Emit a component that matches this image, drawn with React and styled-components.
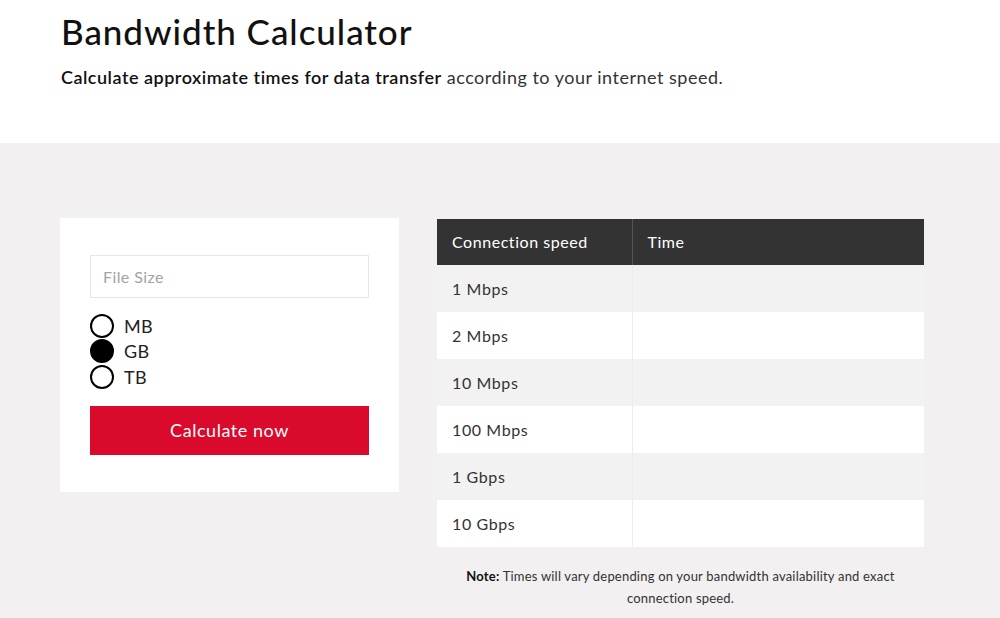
import React from 'react';
import styled, { createGlobalStyle } from 'styled-components';

const speeds = ['1 Mbps', '2 Mbps', '10 Mbps', '100 Mbps', '1 Gbps', '10 Gbps'];
const units = ['MB', 'GB', 'TB'];

const App = () => {
  return (
    <Page>
      <GlobalStyle />
      <Header>
        <Title>Bandwidth Calculator</Title>
        <Lead>
          <strong>Calculate approximate times for data transfer</strong> according to your internet speed.
        </Lead>
      </Header>
      <Body>
        <Card>
          <SizeInput placeholder="File Size" />
          <RadioGroup>
            {units.map((u) => (
              <RadioRow key={u}>
                <RadioDot checked={u === 'GB'} />
                <RadioLabel>{u}</RadioLabel>
              </RadioRow>
            ))}
          </RadioGroup>
          <CalcButton>Calculate now</CalcButton>
        </Card>
        <TableWrap>
          <SpeedTable>
            <thead>
              <tr>
                <Th>Connection speed</Th>
                <Th>Time</Th>
              </tr>
            </thead>
            <tbody>
              {speeds.map((s, i) => (
                <Row key={s} striped={i % 2 === 0}>
                  <Td>{s}</Td>
                  <Td></Td>
                </Row>
              ))}
            </tbody>
          </SpeedTable>
          <Note>
            <b>Note:</b> Times will vary depending on your bandwidth availability and exact
            <br />
            connection speed.
          </Note>
        </TableWrap>
      </Body>
    </Page>
  );
};

const GlobalStyle = createGlobalStyle`
  body {
    margin: 0;
    background: #fff;
    font-family: Lato, "Liberation Sans", sans-serif;
    color: #222;
  }
`;

const Page = styled.div`
  width: 1000px;
  min-height: 618px;
`;

const Header = styled.header`
  height: 143px;
  box-sizing: border-box;
  padding: 10px 61px 0;
`;

const Title = styled.h1`
  margin: 0;
  font-size: 35px;
  font-weight: 500;
  color: #111;
  line-height: 42px;
  letter-spacing: 0.95px;
`;

const Lead = styled.p`
  margin: 14px 0 0;
  font-size: 18px;
  color: #333;
  letter-spacing: 0.5px;

  strong {
    font-weight: 600;
    color: #111;
  }
`;

const Body = styled.section`
  background: #f2f0f0;
  display: flex;
  align-items: flex-start;
  gap: 38px;
  padding: 75px 0 12px 60px;
  min-height: 475px;
  box-sizing: border-box;
`;

const Card = styled.div`
  width: 339px;
  height: 274px;
  box-sizing: border-box;
  background: #fff;
  padding: 37px 30px;
`;

const SizeInput = styled.input`
  display: block;
  width: 279px;
  height: 43px;
  box-sizing: border-box;
  border: 1px solid #e6e6e6;
  padding: 0 12px;
  font-family: inherit;
  font-size: 16px;
  letter-spacing: 0.4px;
  outline: none;

  &::placeholder {
    color: #a3a3a3;
  }
`;

const RadioGroup = styled.div`
  margin-top: 15px;
  display: flex;
  flex-direction: column;
`;

const RadioRow = styled.label`
  display: flex;
  align-items: center;
  height: 25.5px;
  gap: 10px;
`;

const RadioDot = styled.span`
  width: 24px;
  height: 24px;
  box-sizing: border-box;
  border-radius: 50%;
  border: 2px solid #000;
  background: ${(p) => (p.checked ? '#000' : '#fff')};
`;

const RadioLabel = styled.span`
  font-size: 18px;
  color: #222;
  letter-spacing: 0.3px;
`;

const CalcButton = styled.button`
  display: block;
  margin-top: 16px;
  width: 279px;
  height: 49px;
  border: none;
  background: #d90a2c;
  color: #fff;
  font-family: inherit;
  font-size: 18px;
  letter-spacing: 0.55px;
`;

const TableWrap = styled.div`
  width: 487px;
  margin-top: 1px;
`;

const SpeedTable = styled.table`
  width: 100%;
  border-collapse: collapse;
`;

const Th = styled.th`
  background: #333;
  color: #fff;
  font-weight: 400;
  text-align: left;
  font-size: 16px;
  letter-spacing: 0.55px;
  height: 44px;
  padding: 0 15px 2px;
  border-right: 1px solid #555;

  &:first-child {
    width: 195px;
    box-sizing: border-box;
  }
  &:last-child {
    border-right: none;
  }
`;

const Row = styled.tr`
  background: ${(p) => (p.striped ? '#f2f2f2' : '#fff')};
`;

const Td = styled.td`
  height: 47px;
  padding: 0 15px;
  font-size: 16px;
  letter-spacing: 0.6px;
  color: #333;
  border-right: 1px solid #ececec;

  &:last-child {
    border-right: none;
  }
`;

const Note = styled.p`
  margin: 18px 0 0;
  text-align: center;
  font-size: 13px;
  line-height: 22px;
  letter-spacing: 0.2px;
  color: #333;

  b {
    color: #111;
  }
`;

export default App;
